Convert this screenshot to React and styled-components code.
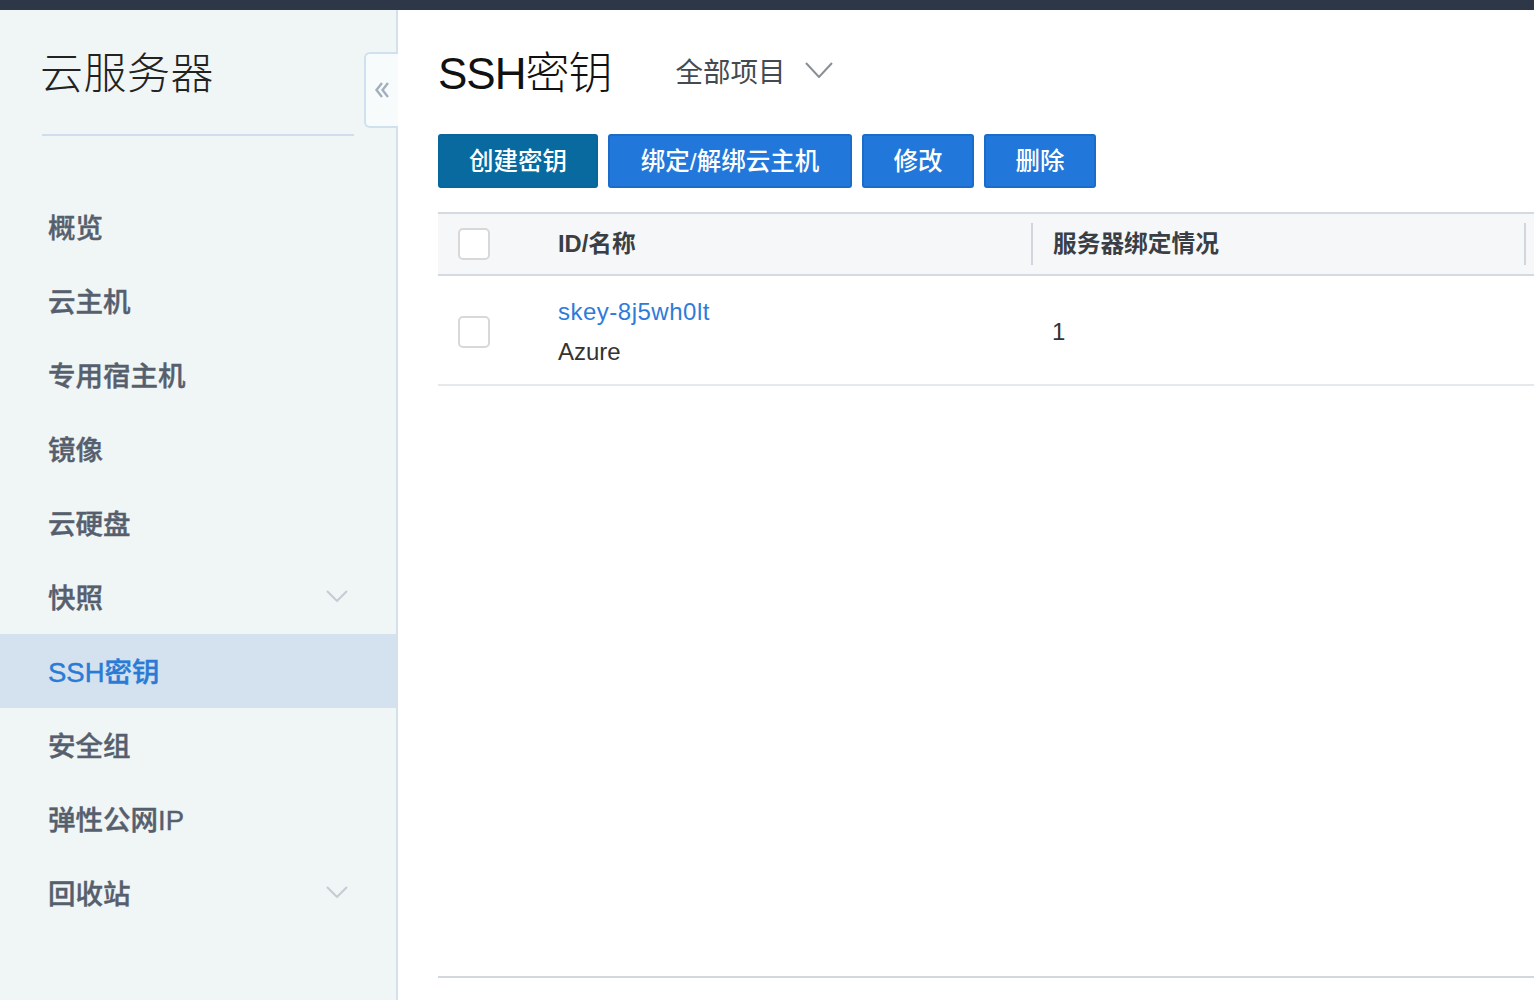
import React from "react";
import styled, { createGlobalStyle } from "styled-components";

const Global = createGlobalStyle`
  html, body { margin: 0; padding: 0; background: #fff; }
  body {
    font-family: "Liberation Sans", "Noto Sans CJK SC", sans-serif;
    color: #333;
    overflow: hidden;
  }
  * { box-sizing: border-box; }
`;

const Page = styled.div`
  width: 1534px;
  height: 1000px;
  display: flex;
  flex-direction: column;
`;

const TopBar = styled.div`
  height: 10px;
  background: #2e3747;
  flex: none;
`;

const Body = styled.div`
  flex: 1;
  display: flex;
  min-height: 0;
`;

const Sidebar = styled.aside`
  position: relative;
  width: 398px;
  flex: none;
  background: #f0f5f6;
  border-right: 2px solid #d3e1ec;
  display: flex;
  flex-direction: column;
`;

const SideTitle = styled.div`
  margin: 31px 42px 0 42px;
  padding-bottom: 35px;
  border-bottom: 2px solid #cfdeea;
  font-family: "Noto Sans CJK SC", sans-serif;
  font-weight: 300;
  font-size: 43px;
  line-height: 58px;
  color: #222;
  letter-spacing: 0.5px;
  text-indent: -2px;
`;

const Collapse = styled.div`
  position: absolute;
  top: 42px;
  right: -2px;
  width: 34px;
  height: 76px;
  background: #f8fbfc;
  border: 2px solid #cfe0ee;
  border-right: none;
  border-radius: 6px 0 0 6px;
  display: flex;
  align-items: center;
  justify-content: center;
`;

const Nav = styled.nav`
  margin-top: 54px;
  display: flex;
  flex-direction: column;
`;

const NavItem = styled.div`
  height: 74px;
  display: flex;
  align-items: center;
  justify-content: space-between;
  padding: 0 48px 2px 48px;
  font-family: "Liberation Sans", "Noto Sans CJK SC", sans-serif;
  font-size: 27.5px;
  font-weight: 500;
  -webkit-text-stroke: 0.4px currentColor;
  color: ${(p) => (p.$active ? "#2a7bd6" : "#565f6d")};
  background: ${(p) => (p.$active ? "#d4e2ef" : "transparent")};
`;

const Main = styled.main`
  flex: 1;
  min-width: 0;
  padding: 34px 0 0 40px;
  display: flex;
  flex-direction: column;
`;

const TitleRow = styled.div`
  height: 56px;
  display: flex;
  align-items: center;
  padding-bottom: 4px;
`;

const Title = styled.h1`
  margin: 0;
  font-family: "Liberation Sans", "Noto Sans CJK SC", sans-serif;
  font-weight: 300;
  font-size: 44px;
  color: #111;
  letter-spacing: -1px;
`;

const ProjectSelect = styled.div`
  margin-left: 64px;
  display: flex;
  align-items: center;
  gap: 20px;
  font-family: "Noto Sans CJK SC", sans-serif;
  font-size: 27.5px;
  font-weight: 400;
  color: #444a52;
`;

const Toolbar = styled.div`
  margin-top: 34px;
  display: flex;
  gap: 10px;
`;

const Button = styled.button`
  height: 54px;
  width: ${(p) => p.$w}px;
  border-radius: 3px;
  border: 2px solid ${(p) => (p.$primary ? "#07669c" : "#1a6cc9")};
  background: ${(p) => (p.$primary ? "#086a9f" : "#2178da")};
  color: #fff;
  font-family: "Liberation Sans", "Noto Sans CJK SC", sans-serif;
  font-size: 24.5px;
  font-weight: 500;
  padding: 0 0 3px;
  cursor: pointer;
`;

const Table = styled.div`
  margin-top: 24px;
  display: flex;
  flex-direction: column;
  flex: 1;
`;

const HeadRow = styled.div`
  display: grid;
  grid-template-columns: 120px 475px 493px 1fr;
  height: 64px;
  background: #f5f7f9;
  border-top: 2px solid #d5dae0;
  border-bottom: 2px solid #d5dae0;
`;

const HeadCell = styled.div`
  display: flex;
  align-items: center;
  position: relative;
  padding-left: ${(p) => p.$pl || 0}px;
  padding-bottom: 4px;
  font-family: "Liberation Sans", "Noto Sans CJK SC", sans-serif;
  font-size: 23.7px;
  font-weight: 700;
  color: #3a3f46;
  &::before {
    content: ${(p) => (p.$sep ? '""' : "none")};
    position: absolute;
    left: -2px;
    top: 9px;
    bottom: 9px;
    width: 2px;
    background: #d2d6dc;
  }
`;

const HeadBox = styled.span`
  display: block;
  width: 32px;
  height: 32px;
  margin-left: 20px;
  margin-top: 4px;
  border: 2px solid #d8d8d8;
  border-radius: 5px;
  background: #fff;
`;

const DataRow = styled.div`
  display: grid;
  grid-template-columns: 120px 475px 493px 1fr;
  height: 110px;
  border-bottom: 2px solid #e6e9ec;
`;

const Cell = styled.div`
  display: flex;
  flex-direction: column;
  justify-content: center;
  padding-left: ${(p) => p.$pl || 0}px;
  padding-top: 4px;
  font-family: "Liberation Sans", "Noto Sans CJK SC", sans-serif;
  font-size: 24px;
  color: #333;
`;

const CheckBox = styled.span`
  display: block;
  width: 32px;
  height: 32px;
  margin-left: 20px;
  border: 2px solid #d8d8d8;
  border-radius: 5px;
  background: #fff;
`;

const LinkText = styled.a`
  color: #2f7bd9;
  line-height: 40px;
  text-decoration: none;
  letter-spacing: 0.5px;
`;

const SubText = styled.span`
  color: #333;
  line-height: 40px;
`;

const Spacer = styled.div`
  flex: 1;
`;

const BottomLine = styled.div`
  height: 2px;
  background: #d2d7de;
  margin-bottom: 22px;
`;

const Chevron = ({ w = 22, h = 12, color = "#c4ccd4", sw = 2 }) => (
  <svg width={w} height={h} viewBox={`0 0 ${w} ${h}`} fill="none">
    <path d={`M1 1 L${w / 2} ${h - 1} L${w - 1} 1`} stroke={color} strokeWidth={sw} />
  </svg>
);

const DoubleLeft = () => (
  <svg width="18" height="18" viewBox="0 0 18 18" fill="none">
    <path d="M9 2 L3.5 9 L9 16" stroke="#a3afbc" strokeWidth="2.4" />
    <path d="M15 2 L9.5 9 L15 16" stroke="#a3afbc" strokeWidth="2.4" />
  </svg>
);

const navItems = [
  { label: "概览" },
  { label: "云主机" },
  { label: "专用宿主机" },
  { label: "镜像" },
  { label: "云硬盘" },
  { label: "快照", caret: true },
  { label: "SSH密钥", active: true },
  { label: "安全组" },
  { label: "弹性公网IP" },
  { label: "回收站", caret: true },
];

export default function App() {
  return (
    <Page>
      <Global />
      <TopBar />
      <Body>
        <Sidebar>
          <SideTitle>云服务器</SideTitle>
          <Collapse>
            <DoubleLeft />
          </Collapse>
          <Nav>
            {navItems.map((it) => (
              <NavItem key={it.label} $active={it.active}>
                <span>{it.label}</span>
                {it.caret && <Chevron />}
              </NavItem>
            ))}
          </Nav>
        </Sidebar>
        <Main>
          <TitleRow>
            <Title>SSH密钥</Title>
            <ProjectSelect>
              <span>全部项目</span>
              <Chevron w={28} h={16} color="#8a8f96" sw={2} />
            </ProjectSelect>
          </TitleRow>
          <Toolbar>
            <Button $primary $w={160}>创建密钥</Button>
            <Button $w={244}>绑定/解绑云主机</Button>
            <Button $w={112}>修改</Button>
            <Button $w={112}>删除</Button>
          </Toolbar>
          <Table>
            <HeadRow>
              <HeadCell>
                <HeadBox />
              </HeadCell>
              <HeadCell>ID/名称</HeadCell>
              <HeadCell $sep $pl={20}>服务器绑定情况</HeadCell>
              <HeadCell $sep />
            </HeadRow>
            <DataRow>
              <Cell>
                <CheckBox />
              </Cell>
              <Cell>
                <LinkText href="#">skey-8j5wh0lt</LinkText>
                <SubText>Azure</SubText>
              </Cell>
              <Cell $pl={19}>1</Cell>
              <Cell />
            </DataRow>
            <Spacer />
            <BottomLine />
          </Table>
        </Main>
      </Body>
    </Page>
  );
}
